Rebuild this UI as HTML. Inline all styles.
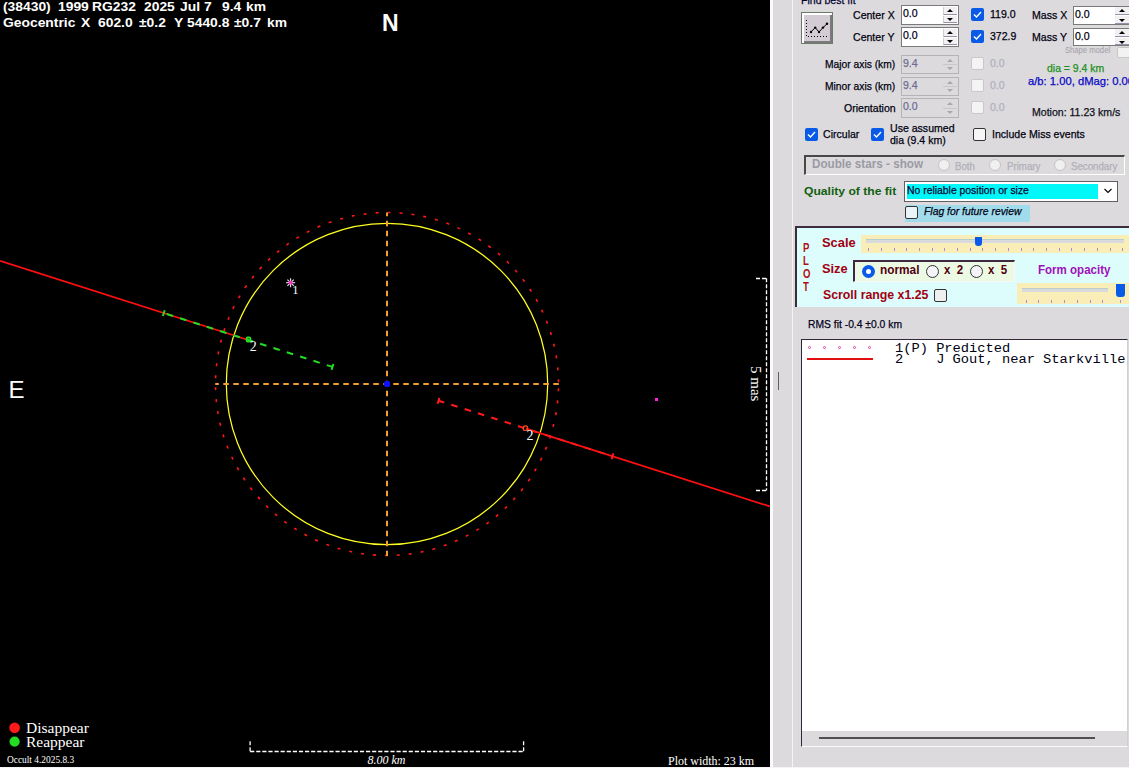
<!DOCTYPE html><html><head><meta charset="utf-8"><style>
html,body{margin:0;padding:0;}
body{width:1129px;height:768px;position:relative;overflow:hidden;background:#dcdadc;font-family:'Liberation Sans',sans-serif;}
.t{position:absolute;white-space:pre;}
.b{position:absolute;box-sizing:border-box;}
svg{position:absolute;left:0;top:0;}
</style></head><body>
<svg width="770" height="767" viewBox="0 0 770 767">
<rect x="0" y="0" width="770" height="767" fill="#000"/>
<circle cx="387" cy="384" r="171.5" fill="none" stroke="#ff1818" stroke-width="1.6" stroke-dasharray="3 9" stroke-dashoffset="-4.4"/>
<circle cx="387" cy="384" r="160.7" fill="none" stroke="#ffff20" stroke-width="1.25"/>
<line x1="215.2" y1="384" x2="558.8" y2="384" stroke="#f0a030" stroke-width="2" stroke-dasharray="5.5 4.5" stroke-dashoffset="1.9"/>
<line x1="387" y1="212.4" x2="387" y2="556" stroke="#f0a030" stroke-width="2" stroke-dasharray="5.5 4.5" stroke-dashoffset="1.6"/>
<circle cx="387" cy="384" r="3.2" fill="#1010ff"/>
<line x1="0" y1="260.80" x2="248.3" y2="340.03" stroke="#ff1010" stroke-width="1.7"/>
<line x1="526" y1="428.64" x2="770" y2="506.50" stroke="#ff1010" stroke-width="1.7"/>
<line x1="163.8" y1="313.07" x2="332.5" y2="366.90" stroke="#22dd22" stroke-width="2" stroke-dasharray="6.6 7.4" stroke-dashoffset="-3.1"/>
<line x1="162.89" y1="315.93" x2="164.71" y2="310.21" stroke="#22dd22" stroke-width="2"/>
<line x1="331.59" y1="369.76" x2="333.41" y2="364.04" stroke="#22dd22" stroke-width="2"/>
<line x1="438.5" y1="400.72" x2="612.5" y2="456.24" stroke="#ff1a1a" stroke-width="2" stroke-dasharray="6.6 7.4" stroke-dashoffset="0.6"/>
<line x1="437.59" y1="403.58" x2="439.41" y2="397.86" stroke="#ff1a1a" stroke-width="2"/>
<line x1="611.59" y1="459.10" x2="613.41" y2="453.39" stroke="#ff1a1a" stroke-width="2"/>
<rect x="246.6" y="337.5" width="3.8" height="4" rx="1" fill="none" stroke="#22dd22" stroke-width="1.8"/>
<circle cx="525.4" cy="428.2" r="2.3" fill="none" stroke="#ff4a20" stroke-width="1.2"/>
<line x1="295.10" y1="282.70" x2="286.10" y2="282.70" stroke="#f4dcf4" stroke-width="1.1"/>
<line x1="293.78" y1="285.88" x2="287.42" y2="279.52" stroke="#f4dcf4" stroke-width="1.1"/>
<line x1="290.60" y1="287.20" x2="290.60" y2="278.20" stroke="#f4dcf4" stroke-width="1.1"/>
<line x1="287.42" y1="285.88" x2="293.78" y2="279.52" stroke="#f4dcf4" stroke-width="1.1"/>
<circle cx="290.6" cy="282.7" r="1.9" fill="#ff30c8"/>
<rect x="655" y="398" width="3" height="3" fill="#ff20e0"/>
<line x1="766.5" y1="278.2" x2="766.5" y2="490.5" stroke="#fff" stroke-width="1.3" stroke-dasharray="4 2"/>
<line x1="756" y1="278.5" x2="766.5" y2="278.5" stroke="#fff" stroke-width="1.3" stroke-dasharray="4 2"/>
<line x1="756" y1="490.5" x2="766.5" y2="490.5" stroke="#fff" stroke-width="1.3" stroke-dasharray="4 2"/>
<line x1="250.1" y1="751.5" x2="523.6" y2="751.5" stroke="#fff" stroke-width="1.3" stroke-dasharray="4.2 1.9"/>
<line x1="250.1" y1="741.2" x2="250.1" y2="751.5" stroke="#fff" stroke-width="1.3" stroke-dasharray="4 2"/>
<line x1="523.6" y1="741.2" x2="523.6" y2="751.5" stroke="#fff" stroke-width="1.3" stroke-dasharray="4 2"/>
<circle cx="14.6" cy="727.8" r="5.3" fill="#ff1a1a"/>
<circle cx="14.6" cy="741.6" r="5.1" fill="#22dd22"/>
</svg>
<div class="t" style="left:3.20px;top:-0.40px;font-family:'Liberation Sans';font-size:13px;line-height:13px;color:#fff;font-weight:bold;transform:scaleX(1.065);transform-origin:0 0;">(38430)</div>
<div class="t" style="left:58.20px;top:-0.40px;font-family:'Liberation Sans';font-size:13px;line-height:13px;color:#fff;font-weight:bold;transform:scaleX(1.065);transform-origin:0 0;">1999</div>
<div class="t" style="left:91.70px;top:-0.40px;font-family:'Liberation Sans';font-size:13px;line-height:13px;color:#fff;font-weight:bold;transform:scaleX(1.065);transform-origin:0 0;">RG232</div>
<div class="t" style="left:144.10px;top:-0.40px;font-family:'Liberation Sans';font-size:13px;line-height:13px;color:#fff;font-weight:bold;transform:scaleX(1.065);transform-origin:0 0;">2025</div>
<div class="t" style="left:180.20px;top:-0.40px;font-family:'Liberation Sans';font-size:13px;line-height:13px;color:#fff;font-weight:bold;transform:scaleX(1.065);transform-origin:0 0;">Jul</div>
<div class="t" style="left:204.10px;top:-0.40px;font-family:'Liberation Sans';font-size:13px;line-height:13px;color:#fff;font-weight:bold;transform:scaleX(1.065);transform-origin:0 0;">7</div>
<div class="t" style="left:221.70px;top:-0.40px;font-family:'Liberation Sans';font-size:13px;line-height:13px;color:#fff;font-weight:bold;transform:scaleX(1.065);transform-origin:0 0;">9.4</div>
<div class="t" style="left:246.10px;top:-0.40px;font-family:'Liberation Sans';font-size:13px;line-height:13px;color:#fff;font-weight:bold;transform:scaleX(1.065);transform-origin:0 0;">km</div>
<div class="t" style="left:3.20px;top:15.60px;font-family:'Liberation Sans';font-size:13px;line-height:13px;color:#fff;font-weight:bold;transform:scaleX(1.065);transform-origin:0 0;">Geocentric</div>
<div class="t" style="left:81.20px;top:15.60px;font-family:'Liberation Sans';font-size:13px;line-height:13px;color:#fff;font-weight:bold;transform:scaleX(1.065);transform-origin:0 0;">X</div>
<div class="t" style="left:98.00px;top:15.60px;font-family:'Liberation Sans';font-size:13px;line-height:13px;color:#fff;font-weight:bold;transform:scaleX(1.065);transform-origin:0 0;">602.0</div>
<div class="t" style="left:138.70px;top:15.60px;font-family:'Liberation Sans';font-size:13px;line-height:13px;color:#fff;font-weight:bold;transform:scaleX(1.065);transform-origin:0 0;">±0.2</div>
<div class="t" style="left:174.20px;top:15.60px;font-family:'Liberation Sans';font-size:13px;line-height:13px;color:#fff;font-weight:bold;transform:scaleX(1.065);transform-origin:0 0;">Y</div>
<div class="t" style="left:187.10px;top:15.60px;font-family:'Liberation Sans';font-size:13px;line-height:13px;color:#fff;font-weight:bold;transform:scaleX(1.065);transform-origin:0 0;">5440.8</div>
<div class="t" style="left:234.40px;top:15.60px;font-family:'Liberation Sans';font-size:13px;line-height:13px;color:#fff;font-weight:bold;transform:scaleX(1.065);transform-origin:0 0;">±0.7</div>
<div class="t" style="left:266.70px;top:15.60px;font-family:'Liberation Sans';font-size:13px;line-height:13px;color:#fff;font-weight:bold;transform:scaleX(1.065);transform-origin:0 0;">km</div>
<div class="t" style="left:382.00px;top:11.53px;font-family:'Liberation Sans';font-size:23px;line-height:23px;color:#fff;font-weight:bold;">N</div>
<div class="t" style="left:8.50px;top:377.68px;font-family:'Liberation Sans';font-size:24px;line-height:24px;color:#fff;">E</div>
<div class="t" style="left:292.20px;top:283.53px;font-family:'Liberation Serif';font-size:12.5px;line-height:12.5px;color:#f0ffff;">1</div>
<div class="t" style="left:249.80px;top:340.47px;font-family:'Liberation Serif';font-size:14px;line-height:14px;color:#f4faff;">2</div>
<div class="t" style="left:526.60px;top:429.47px;font-family:'Liberation Serif';font-size:14px;line-height:14px;color:#f4faff;">2</div>
<div class="t" style="left:26.00px;top:720.22px;font-family:'Liberation Serif';font-size:15.5px;line-height:15.5px;color:#fff;">Disappear</div>
<div class="t" style="left:26.00px;top:733.92px;font-family:'Liberation Serif';font-size:15.5px;line-height:15.5px;color:#fff;">Reappear</div>
<div class="t" style="left:7.20px;top:754.62px;font-family:'Liberation Serif';font-size:10px;line-height:10px;color:#fff;transform:scaleX(0.937);transform-origin:0 0;">Occult 4.2025.8.3</div>
<div class="t" style="left:367.50px;top:754.15px;font-family:'Liberation Serif';font-size:12px;line-height:12px;color:#fff;font-style:italic;">8.00 km</div>
<div class="t" style="left:668.00px;top:753.81px;font-family:'Liberation Serif';font-size:13px;line-height:13px;color:#fff;transform:scaleX(0.92);transform-origin:0 0;">Plot width: 23 km</div>
<div class="t" style="left:745px;top:366.3px;width:20px;height:40px;"><div style="position:absolute;left:17.8px;top:0;transform:rotate(90deg);transform-origin:0 0;font-family:'Liberation Serif';font-size:15px;line-height:15px;color:#fff;white-space:pre">5 mas</div></div>
<div class="b" style="left:770px;top:0px;width:3px;height:767px;background:#fbfbfb;"></div>
<div class="b" style="left:792px;top:0px;width:1px;height:767px;background:#f4f4f4;"></div>
<div class="b" style="left:0px;top:767px;width:1129px;height:1px;background:#f4f4f4;"></div>
<div class="t" style="left:801.20px;top:-5.13px;font-family:'Liberation Sans';font-size:11.5px;line-height:11.5px;color:#000030;transform:scaleX(0.9182608695652175);transform-origin:0 0;-webkit-text-stroke:0.25px #000030;">Find best fit</div>
<div class="b" style="left:801px;top:12px;width:32px;height:32px;background:#d4ccd4;border:1px solid #6a7a6a;box-shadow:inset 2px 2px 0 #fff, inset -2px -2px 0 #7a7a7a;"></div>
<svg style="left:801px;top:12px" width="32" height="32"><path d="M5.5 8 V24.5 H26" fill="none" stroke="#000" stroke-width="1" stroke-dasharray="1 2"/><polyline points="10,20 14.2,15.6 18,20 22,15.6 26,11.8" fill="none" stroke="#000" stroke-width="1"/><circle cx="10" cy="20" r="1.2"/><circle cx="14.2" cy="15.6" r="1.2"/><circle cx="18" cy="20" r="1.2"/><circle cx="22" cy="15.6" r="1.2"/><circle cx="26" cy="11.8" r="1.2"/></svg>
<div class="t" style="left:853.30px;top:10.07px;font-family:'Liberation Sans';font-size:11.5px;line-height:11.5px;color:#000010;transform:scaleX(0.9182608695652175);transform-origin:0 0;-webkit-text-stroke:0.25px #000010;">Center X</div>
<div class="t" style="left:853.30px;top:31.87px;font-family:'Liberation Sans';font-size:11.5px;line-height:11.5px;color:#000010;transform:scaleX(0.9182608695652175);transform-origin:0 0;-webkit-text-stroke:0.25px #000010;">Center Y</div>
<div class="b" style="left:901px;top:5px;width:58px;height:20px;border:1px solid #7a7a7a;background:#fff;"></div>
<div class="t" style="left:903.00px;top:8.47px;font-family:'Liberation Sans';font-size:11.5px;line-height:11.5px;color:#000020;transform:scaleX(0.9182608695652175);transform-origin:0 0;-webkit-text-stroke:0.25px #000020;">0.0</div>
<div class="b" style="left:943px;top:7px;width:14px;height:8.0px;background:#f2f0f2;border-left:1px solid #c8d4c8;border-bottom:1px solid #9890a8;"></div>
<div class="b" style="left:943px;top:15.5px;width:14px;height:7.5px;background:#f2f0f2;border-left:1px solid #c8d4c8;border-bottom:1px solid #9890a8;"></div>
<div class="b" style="left:946.5px;top:9.0px;width:0;height:0;border-left:3.5px solid transparent;border-right:3.5px solid transparent;border-bottom:3.5px solid #000;"></div>
<div class="b" style="left:946.5px;top:17.5px;width:0;height:0;border-left:3.5px solid transparent;border-right:3.5px solid transparent;border-top:3.5px solid #000;"></div>
<div class="b" style="left:901px;top:27px;width:58px;height:20px;border:1px solid #7a7a7a;background:#fff;"></div>
<div class="t" style="left:903.00px;top:30.47px;font-family:'Liberation Sans';font-size:11.5px;line-height:11.5px;color:#000020;transform:scaleX(0.9182608695652175);transform-origin:0 0;-webkit-text-stroke:0.25px #000020;">0.0</div>
<div class="b" style="left:943px;top:29px;width:14px;height:8.0px;background:#f2f0f2;border-left:1px solid #c8d4c8;border-bottom:1px solid #9890a8;"></div>
<div class="b" style="left:943px;top:37.5px;width:14px;height:7.5px;background:#f2f0f2;border-left:1px solid #c8d4c8;border-bottom:1px solid #9890a8;"></div>
<div class="b" style="left:946.5px;top:31.0px;width:0;height:0;border-left:3.5px solid transparent;border-right:3.5px solid transparent;border-bottom:3.5px solid #000;"></div>
<div class="b" style="left:946.5px;top:39.5px;width:0;height:0;border-left:3.5px solid transparent;border-right:3.5px solid transparent;border-top:3.5px solid #000;"></div>
<div class="b" style="left:971px;top:8px;width:13px;height:13px;background:#0a5ae8;border-radius:2px;"></div>
<svg style="left:971px;top:8px" width="13" height="13"><polyline points="3,6.5 5.5,9 10,4" fill="none" stroke="#fff" stroke-width="1.4"/></svg>
<div class="b" style="left:971px;top:30px;width:13px;height:13px;background:#0a5ae8;border-radius:2px;"></div>
<svg style="left:971px;top:30px" width="13" height="13"><polyline points="3,6.5 5.5,9 10,4" fill="none" stroke="#fff" stroke-width="1.4"/></svg>
<div class="t" style="left:990.20px;top:8.97px;font-family:'Liberation Sans';font-size:11.5px;line-height:11.5px;color:#000010;transform:scaleX(0.9182608695652175);transform-origin:0 0;-webkit-text-stroke:0.25px #000010;">119.0</div>
<div class="t" style="left:990.20px;top:30.97px;font-family:'Liberation Sans';font-size:11.5px;line-height:11.5px;color:#000010;transform:scaleX(0.9182608695652175);transform-origin:0 0;-webkit-text-stroke:0.25px #000010;">372.9</div>
<div class="t" style="left:1032.10px;top:10.47px;font-family:'Liberation Sans';font-size:11.5px;line-height:11.5px;color:#000010;transform:scaleX(0.9182608695652175);transform-origin:0 0;-webkit-text-stroke:0.25px #000010;">Mass X</div>
<div class="t" style="left:1032.10px;top:32.17px;font-family:'Liberation Sans';font-size:11.5px;line-height:11.5px;color:#000010;transform:scaleX(0.9182608695652175);transform-origin:0 0;-webkit-text-stroke:0.25px #000010;">Mass Y</div>
<div class="b" style="left:1073px;top:6px;width:67px;height:19px;border:1px solid #7a7a7a;background:#fff;"></div>
<div class="t" style="left:1075.00px;top:9.27px;font-family:'Liberation Sans';font-size:11.5px;line-height:11.5px;color:#000010;transform:scaleX(0.9182608695652175);transform-origin:0 0;-webkit-text-stroke:0.25px #000010;">0.0</div>
<div class="b" style="left:1073px;top:28px;width:67px;height:18px;border:1px solid #7a7a7a;background:#fff;"></div>
<div class="t" style="left:1075.00px;top:30.97px;font-family:'Liberation Sans';font-size:11.5px;line-height:11.5px;color:#000010;transform:scaleX(0.9182608695652175);transform-origin:0 0;-webkit-text-stroke:0.25px #000010;">0.0</div>
<div class="b" style="left:1115px;top:7px;width:14px;height:8px;background:#f2f0f2;border-bottom:1px solid #9890a8;"></div>
<div class="b" style="left:1115px;top:16px;width:14px;height:8px;background:#f2f0f2;border-bottom:1px solid #9890a8;"></div>
<div class="b" style="left:1115px;top:29px;width:14px;height:8px;background:#f2f0f2;border-bottom:1px solid #9890a8;"></div>
<div class="b" style="left:1115px;top:38px;width:14px;height:7px;background:#f2f0f2;border-bottom:1px solid #9890a8;"></div>
<div class="b" style="left:1118.5px;top:9px;width:0;height:0;border-left:3.5px solid transparent;border-right:3.5px solid transparent;border-bottom:3.5px solid #000;"></div>
<div class="b" style="left:1118.5px;top:19px;width:0;height:0;border-left:3.5px solid transparent;border-right:3.5px solid transparent;border-top:3.5px solid #000;"></div>
<div class="b" style="left:1118.5px;top:31px;width:0;height:0;border-left:3.5px solid transparent;border-right:3.5px solid transparent;border-bottom:3.5px solid #000;"></div>
<div class="b" style="left:1118.5px;top:41px;width:0;height:0;border-left:3.5px solid transparent;border-right:3.5px solid transparent;border-top:3.5px solid #000;"></div>
<div class="t" style="left:1064.80px;top:46.38px;font-family:'Liberation Sans';font-size:9px;line-height:9px;color:#a0a0a8;transform:scaleX(0.85);transform-origin:0 0;">Shape model</div>
<div class="b" style="left:1117px;top:47px;width:14px;height:11px;border:1px solid #c8c8c8;background:#f2f2f2;border-radius:2px;"></div>
<div class="t" style="left:824.90px;top:59.17px;font-family:'Liberation Sans';font-size:11.5px;line-height:11.5px;color:#000010;transform:scaleX(0.8932173913043479);transform-origin:0 0;-webkit-text-stroke:0.25px #000010;">Major axis (km)</div>
<div class="t" style="left:824.90px;top:81.27px;font-family:'Liberation Sans';font-size:11.5px;line-height:11.5px;color:#000010;transform:scaleX(0.8932173913043479);transform-origin:0 0;-webkit-text-stroke:0.25px #000010;">Minor axis (km)</div>
<div class="t" style="left:843.50px;top:102.57px;font-family:'Liberation Sans';font-size:11.5px;line-height:11.5px;color:#000010;transform:scaleX(0.9182608695652175);transform-origin:0 0;-webkit-text-stroke:0.25px #000010;">Orientation</div>
<div class="b" style="left:901px;top:55px;width:58px;height:19px;border:1px solid #b4b4b4;background:#dcdadc;"></div>
<div class="t" style="left:903.00px;top:58.47px;font-family:'Liberation Sans';font-size:11.5px;line-height:11.5px;color:#6c6c94;transform:scaleX(0.9182608695652175);transform-origin:0 0;-webkit-text-stroke:0.25px #6c6c94;">9.4</div>
<div class="b" style="left:943px;top:57px;width:14px;height:7.5px;background:#dcdadc;"></div>
<div class="b" style="left:943px;top:64.5px;width:14px;height:7.5px;background:#dcdadc;"></div>
<div class="b" style="left:943px;top:64.0px;width:14px;height:1.0px;background:#c8c8cc;"></div>
<div class="b" style="left:946.5px;top:58.5px;width:0;height:0;border-left:3.5px solid transparent;border-right:3.5px solid transparent;border-bottom:3.5px solid #a8a8a8;"></div>
<div class="b" style="left:946.5px;top:67.0px;width:0;height:0;border-left:3.5px solid transparent;border-right:3.5px solid transparent;border-top:3.5px solid #a8a8a8;"></div>
<div class="b" style="left:901px;top:77px;width:58px;height:19px;border:1px solid #b4b4b4;background:#dcdadc;"></div>
<div class="t" style="left:903.00px;top:80.47px;font-family:'Liberation Sans';font-size:11.5px;line-height:11.5px;color:#6c6c94;transform:scaleX(0.9182608695652175);transform-origin:0 0;-webkit-text-stroke:0.25px #6c6c94;">9.4</div>
<div class="b" style="left:943px;top:79px;width:14px;height:7.5px;background:#dcdadc;"></div>
<div class="b" style="left:943px;top:86.5px;width:14px;height:7.5px;background:#dcdadc;"></div>
<div class="b" style="left:943px;top:86.0px;width:14px;height:1.0px;background:#c8c8cc;"></div>
<div class="b" style="left:946.5px;top:80.5px;width:0;height:0;border-left:3.5px solid transparent;border-right:3.5px solid transparent;border-bottom:3.5px solid #a8a8a8;"></div>
<div class="b" style="left:946.5px;top:89.0px;width:0;height:0;border-left:3.5px solid transparent;border-right:3.5px solid transparent;border-top:3.5px solid #a8a8a8;"></div>
<div class="b" style="left:901px;top:98px;width:58px;height:20px;border:1px solid #b4b4b4;background:#dcdadc;"></div>
<div class="t" style="left:903.00px;top:101.47px;font-family:'Liberation Sans';font-size:11.5px;line-height:11.5px;color:#6c6c94;transform:scaleX(0.9182608695652175);transform-origin:0 0;-webkit-text-stroke:0.25px #6c6c94;">0.0</div>
<div class="b" style="left:943px;top:100px;width:14px;height:8.0px;background:#dcdadc;"></div>
<div class="b" style="left:943px;top:108.0px;width:14px;height:8.0px;background:#dcdadc;"></div>
<div class="b" style="left:943px;top:107.5px;width:14px;height:1.0px;background:#c8c8cc;"></div>
<div class="b" style="left:946.5px;top:102.0px;width:0;height:0;border-left:3.5px solid transparent;border-right:3.5px solid transparent;border-bottom:3.5px solid #a8a8a8;"></div>
<div class="b" style="left:946.5px;top:110.5px;width:0;height:0;border-left:3.5px solid transparent;border-right:3.5px solid transparent;border-top:3.5px solid #a8a8a8;"></div>
<div class="b" style="left:971px;top:57px;width:13px;height:13px;border:1px solid #c8c8c8;background:#f4f4f4;border-radius:2px;"></div>
<div class="b" style="left:971px;top:79px;width:13px;height:13px;border:1px solid #c8c8c8;background:#f4f4f4;border-radius:2px;"></div>
<div class="b" style="left:971px;top:101px;width:13px;height:13px;border:1px solid #c8c8c8;background:#f4f4f4;border-radius:2px;"></div>
<div class="t" style="left:989.50px;top:57.77px;font-family:'Liberation Sans';font-size:11.5px;line-height:11.5px;color:#b0b0c0;transform:scaleX(0.9182608695652175);transform-origin:0 0;-webkit-text-stroke:0.25px #b0b0c0;">0.0</div>
<div class="t" style="left:989.50px;top:79.77px;font-family:'Liberation Sans';font-size:11.5px;line-height:11.5px;color:#b0b0c0;transform:scaleX(0.9182608695652175);transform-origin:0 0;-webkit-text-stroke:0.25px #b0b0c0;">0.0</div>
<div class="t" style="left:989.50px;top:101.57px;font-family:'Liberation Sans';font-size:11.5px;line-height:11.5px;color:#b0b0c0;transform:scaleX(0.9182608695652175);transform-origin:0 0;-webkit-text-stroke:0.25px #b0b0c0;">0.0</div>
<div class="t" style="left:1047.10px;top:62.91px;font-family:'Liberation Sans';font-size:10.5px;line-height:10.5px;color:#209020;transform:scaleX(0.995);transform-origin:0 0;-webkit-text-stroke:0.25px #209020;">dia = 9.4 km</div>
<div class="t" style="left:1028.00px;top:76.19px;font-family:'Liberation Sans';font-size:11px;line-height:11px;color:#0808c8;transform:scaleX(1.02);transform-origin:0 0;-webkit-text-stroke:0.25px #0808c8;">a/b: 1.00, dMag: 0.00</div>
<div class="t" style="left:1032.10px;top:106.73px;font-family:'Liberation Sans';font-size:10.6px;line-height:10.6px;color:#101020;transform:scaleX(0.996);transform-origin:0 0;-webkit-text-stroke:0.25px #101020;">Motion: 11.23 km/s</div>
<div class="b" style="left:805px;top:128px;width:13px;height:13px;background:#0a5ae8;border-radius:2px;"></div>
<svg style="left:805px;top:128px" width="13" height="13"><polyline points="3,6.5 5.5,9 10,4" fill="none" stroke="#fff" stroke-width="1.4"/></svg>
<div class="t" style="left:823.10px;top:128.57px;font-family:'Liberation Sans';font-size:11.5px;line-height:11.5px;color:#000010;transform:scaleX(0.9182608695652175);transform-origin:0 0;-webkit-text-stroke:0.25px #000010;">Circular</div>
<div class="b" style="left:871px;top:128px;width:13px;height:13px;background:#0a5ae8;border-radius:2px;"></div>
<svg style="left:871px;top:128px" width="13" height="13"><polyline points="3,6.5 5.5,9 10,4" fill="none" stroke="#fff" stroke-width="1.4"/></svg>
<div class="t" style="left:890.10px;top:122.57px;font-family:'Liberation Sans';font-size:11.5px;line-height:11.5px;color:#000010;transform:scaleX(0.9182608695652175);transform-origin:0 0;-webkit-text-stroke:0.25px #000010;">Use assumed</div>
<div class="t" style="left:890.10px;top:134.67px;font-family:'Liberation Sans';font-size:11.5px;line-height:11.5px;color:#000010;transform:scaleX(0.9182608695652175);transform-origin:0 0;-webkit-text-stroke:0.25px #000010;">dia (9.4 km)</div>
<div class="b" style="left:973px;top:128px;width:13px;height:13px;border:1px solid #333;background:#f6f6f6;border-radius:2px;"></div>
<div class="t" style="left:992.10px;top:129.47px;font-family:'Liberation Sans';font-size:11.5px;line-height:11.5px;color:#000010;transform:scaleX(0.9182608695652175);transform-origin:0 0;-webkit-text-stroke:0.25px #000010;">Include Miss events</div>
<div class="b" style="left:804px;top:155px;width:321px;height:20px;border-top:2px solid #484848;border-left:2px solid #484848;border-right:1px solid #fff;border-bottom:1px solid #fff;"></div>
<div class="t" style="left:811.80px;top:158.34px;font-family:'Liberation Sans';font-size:12px;line-height:12px;color:#9a9aa4;font-weight:bold;transform:scaleX(0.974);transform-origin:0 0;">Double stars - show</div>
<div class="b" style="left:938px;top:159px;width:12px;height:12px;border-radius:50%;border:1px solid #c4c4c4;background:#f0f0f0;"></div>
<div class="t" style="left:955.10px;top:160.69px;font-family:'Liberation Sans';font-size:11px;line-height:11px;color:#b0b0b8;transform:scaleX(0.88);transform-origin:0 0;-webkit-text-stroke:0.25px #b0b0b8;">Both</div>
<div class="b" style="left:989px;top:159px;width:12px;height:12px;border-radius:50%;border:1px solid #c4c4c4;background:#f0f0f0;"></div>
<div class="t" style="left:1007.10px;top:161.19px;font-family:'Liberation Sans';font-size:11px;line-height:11px;color:#b0b0b8;transform:scaleX(0.88);transform-origin:0 0;-webkit-text-stroke:0.25px #b0b0b8;">Primary</div>
<div class="b" style="left:1054px;top:159px;width:12px;height:12px;border-radius:50%;border:1px solid #c4c4c4;background:#f0f0f0;"></div>
<div class="t" style="left:1071.40px;top:161.19px;font-family:'Liberation Sans';font-size:11px;line-height:11px;color:#b0b0b8;transform:scaleX(0.88);transform-origin:0 0;-webkit-text-stroke:0.25px #b0b0b8;">Secondary</div>
<div class="t" style="left:803.80px;top:185.57px;font-family:'Liberation Sans';font-size:11.5px;line-height:11.5px;color:#106010;font-weight:bold;transform:scaleX(1.0539130434782609);transform-origin:0 0;">Quality of the fit</div>
<div class="b" style="left:904px;top:181px;width:214px;height:21px;border:1px solid #606060;background:#fff;"></div>
<div class="b" style="left:906.5px;top:183.5px;width:191.5px;height:15.5px;background:#00f8f8;"></div>
<div class="t" style="left:907.20px;top:184.97px;font-family:'Liberation Sans';font-size:11.5px;line-height:11.5px;color:#000030;transform:scaleX(0.9036521739130434);transform-origin:0 0;-webkit-text-stroke:0.25px #000030;">No reliable position or size</div>
<svg style="left:1100px;top:184px" width="16" height="14"><polyline points="4.5,5 8,8.5 11.5,5" fill="none" stroke="#000" stroke-width="1.1"/></svg>
<div class="b" style="left:905px;top:204.5px;width:125px;height:17.5px;background:#a0dcec;"></div>
<div class="b" style="left:904.5px;top:206px;width:13.0px;height:13px;border:1px solid #333;background:#eaf4f8;border-radius:2px;"></div>
<div class="t" style="left:923.70px;top:206.07px;font-family:'Liberation Sans';font-size:11.5px;line-height:11.5px;color:#000010;font-style:italic;transform:scaleX(0.9015652173913044);transform-origin:0 0;-webkit-text-stroke:0.25px #000010;">Flag for future review</div>
<div class="b" style="left:795px;top:226px;width:345px;height:81px;background:#ddfcfc;border-top:2px solid #3c2c3c;border-left:2px solid #3c2c3c;"></div>
<div class="t" style="left:802.50px;top:241.84px;font-family:'Liberation Sans';font-size:12px;line-height:12px;color:#b01010;font-weight:bold;transform:scaleX(0.8);transform-origin:0 0;">P</div>
<div class="t" style="left:802.50px;top:254.74px;font-family:'Liberation Sans';font-size:12px;line-height:12px;color:#b01010;font-weight:bold;transform:scaleX(0.8);transform-origin:0 0;">L</div>
<div class="t" style="left:802.50px;top:267.64px;font-family:'Liberation Sans';font-size:12px;line-height:12px;color:#b01010;font-weight:bold;transform:scaleX(0.8);transform-origin:0 0;">O</div>
<div class="t" style="left:802.50px;top:280.54px;font-family:'Liberation Sans';font-size:12px;line-height:12px;color:#b01010;font-weight:bold;transform:scaleX(0.8);transform-origin:0 0;">T</div>
<div class="t" style="left:821.90px;top:237.32px;font-family:'Liberation Sans';font-size:12.5px;line-height:12.5px;color:#a00010;font-weight:bold;transform:scaleX(1.03);transform-origin:0 0;">Scale</div>
<div class="b" style="left:861px;top:234.5px;width:268px;height:18.0px;background:#faeeb8;"></div>
<div class="b" style="left:866px;top:239px;width:258px;height:3.5px;background:#d8dadc;border-top:1px solid #bcc;"></div>
<div class="b" style="left:975px;top:236.5px;width:6.5px;height:9.5px;background:#0a5ae8;border-radius:0 0 3px 3px;"></div>
<div class="b" style="left:868px;top:248px;width:1px;height:3px;background:#b888c8;"></div>
<div class="b" style="left:881px;top:248px;width:1px;height:3px;background:#b888c8;"></div>
<div class="b" style="left:894px;top:248px;width:1px;height:3px;background:#b888c8;"></div>
<div class="b" style="left:906px;top:248px;width:1px;height:3px;background:#b888c8;"></div>
<div class="b" style="left:919px;top:248px;width:1px;height:3px;background:#b888c8;"></div>
<div class="b" style="left:932px;top:248px;width:1px;height:3px;background:#b888c8;"></div>
<div class="b" style="left:944px;top:248px;width:1px;height:3px;background:#b888c8;"></div>
<div class="b" style="left:957px;top:248px;width:1px;height:3px;background:#b888c8;"></div>
<div class="b" style="left:970px;top:248px;width:1px;height:3px;background:#b888c8;"></div>
<div class="b" style="left:982px;top:248px;width:1px;height:3px;background:#b888c8;"></div>
<div class="b" style="left:995px;top:248px;width:1px;height:3px;background:#b888c8;"></div>
<div class="b" style="left:1008px;top:248px;width:1px;height:3px;background:#b888c8;"></div>
<div class="b" style="left:1021px;top:248px;width:1px;height:3px;background:#b888c8;"></div>
<div class="b" style="left:1033px;top:248px;width:1px;height:3px;background:#b888c8;"></div>
<div class="b" style="left:1046px;top:248px;width:1px;height:3px;background:#b888c8;"></div>
<div class="b" style="left:1059px;top:248px;width:1px;height:3px;background:#b888c8;"></div>
<div class="b" style="left:1071px;top:248px;width:1px;height:3px;background:#b888c8;"></div>
<div class="b" style="left:1084px;top:248px;width:1px;height:3px;background:#b888c8;"></div>
<div class="b" style="left:1097px;top:248px;width:1px;height:3px;background:#b888c8;"></div>
<div class="b" style="left:1110px;top:248px;width:1px;height:3px;background:#b888c8;"></div>
<div class="b" style="left:1122px;top:248px;width:1px;height:3px;background:#b888c8;"></div>
<div class="t" style="left:821.90px;top:263.22px;font-family:'Liberation Sans';font-size:12.5px;line-height:12.5px;color:#a00010;font-weight:bold;transform:scaleX(1.025);transform-origin:0 0;">Size</div>
<div class="b" style="left:852.5px;top:260px;width:162.5px;height:21.5px;background:#ecfae4;border-top:2px solid #402840;border-left:2px solid #402840;border-right:1px solid #f8f8f8;border-bottom:1px solid #f8f8f8;"></div>
<div class="b" style="left:862px;top:264.5px;width:13px;height:13.0px;border-radius:50%;background:#0a5ae8;"></div>
<div class="b" style="left:866px;top:268.5px;width:5px;height:5.0px;border-radius:50%;background:#fff;"></div>
<div class="t" style="left:879.90px;top:263.92px;font-family:'Liberation Sans';font-size:12.5px;line-height:12.5px;color:#500010;font-weight:bold;transform:scaleX(0.946);transform-origin:0 0;">normal</div>
<div class="b" style="left:926px;top:264.5px;width:13px;height:13.0px;border-radius:50%;border:1px solid #333;background:#f4f4f8;"></div>
<div class="t" style="left:943.50px;top:263.92px;font-family:'Liberation Sans';font-size:12.5px;line-height:12.5px;color:#500010;font-weight:bold;transform:scaleX(0.92);transform-origin:0 0;">x  2</div>
<div class="b" style="left:970px;top:264.5px;width:13px;height:13.0px;border-radius:50%;border:1px solid #333;background:#f4f4f8;"></div>
<div class="t" style="left:988.30px;top:263.92px;font-family:'Liberation Sans';font-size:12.5px;line-height:12.5px;color:#500010;font-weight:bold;transform:scaleX(0.92);transform-origin:0 0;">x  5</div>
<div class="t" style="left:1037.50px;top:264.12px;font-family:'Liberation Sans';font-size:12.5px;line-height:12.5px;color:#a010b8;font-weight:bold;transform:scaleX(0.923);transform-origin:0 0;">Form opacity</div>
<div class="t" style="left:822.90px;top:289.22px;font-family:'Liberation Sans';font-size:12.5px;line-height:12.5px;color:#a00010;font-weight:bold;transform:scaleX(0.985);transform-origin:0 0;">Scroll range x1.25</div>
<div class="b" style="left:934px;top:289px;width:13px;height:13px;border:1px solid #333;background:#eef0f0;border-radius:2px;"></div>
<div class="b" style="left:1016.5px;top:282.5px;width:112.5px;height:21.0px;background:#faeeb8;"></div>
<div class="b" style="left:1022px;top:288px;width:86px;height:3.5px;background:#d8dadc;border-top:1px solid #bcc;"></div>
<div class="b" style="left:1116px;top:284px;width:8.5px;height:13px;background:#0a5ae8;border-radius:0 0 3px 3px;"></div>
<div class="b" style="left:1026px;top:299.5px;width:1px;height:3.0px;background:#b888c8;"></div>
<div class="b" style="left:1038px;top:299.5px;width:1px;height:3.0px;background:#b888c8;"></div>
<div class="b" style="left:1051px;top:299.5px;width:1px;height:3.0px;background:#b888c8;"></div>
<div class="b" style="left:1064px;top:299.5px;width:1px;height:3.0px;background:#b888c8;"></div>
<div class="b" style="left:1077px;top:299.5px;width:1px;height:3.0px;background:#b888c8;"></div>
<div class="b" style="left:1090px;top:299.5px;width:1px;height:3.0px;background:#b888c8;"></div>
<div class="b" style="left:1102px;top:299.5px;width:1px;height:3.0px;background:#b888c8;"></div>
<div class="b" style="left:1120px;top:299.5px;width:1px;height:3.0px;background:#b888c8;"></div>
<div class="t" style="left:807.90px;top:318.87px;font-family:'Liberation Sans';font-size:11.5px;line-height:11.5px;color:#000018;transform:scaleX(0.8973913043478261);transform-origin:0 0;-webkit-text-stroke:0.25px #000018;">RMS fit -0.4 ±0.0 km</div>
<div class="b" style="left:800.5px;top:339px;width:327.5px;height:408px;background:#fff;border-top:1px solid #302838;border-left:1px solid #302838;border-right:1px solid #d0d0d0;border-bottom:1px solid #fafafa;"></div>
<div class="b" style="left:801.5px;top:730.5px;width:325.5px;height:15.5px;background:#dcdadc;"></div>
<div class="b" style="left:819px;top:737px;width:276px;height:2px;background:#505050;"></div>
<div class="b" style="left:807.6px;top:345.7px;width:3.5px;height:3.5px;border-radius:50%;border:1px solid #e040a0;"></div>
<div class="b" style="left:822.6px;top:345.7px;width:3.5px;height:3.5px;border-radius:50%;border:1px solid #e040a0;"></div>
<div class="b" style="left:837.6px;top:345.7px;width:3.5px;height:3.5px;border-radius:50%;border:1px solid #e040a0;"></div>
<div class="b" style="left:852.6px;top:345.7px;width:3.5px;height:3.5px;border-radius:50%;border:1px solid #e040a0;"></div>
<div class="b" style="left:867.6px;top:345.7px;width:3.5px;height:3.5px;border-radius:50%;border:1px solid #e040a0;"></div>
<div class="b" style="left:807px;top:357.6px;width:66px;height:2.1999999999999886px;background:#e01010;"></div>
<div class="t" style="left:894.60px;top:342.77px;font-family:'Liberation Mono';font-size:12.3px;line-height:12.3px;color:#000010;transform:scaleX(1.115);transform-origin:0 0;">1(P) Predicted</div>
<div class="t" style="left:894.60px;top:354.17px;font-family:'Liberation Mono';font-size:12.3px;line-height:12.3px;color:#000010;transform:scaleX(1.115);transform-origin:0 0;">2    J Gout, near Starkville</div>
<div class="b" style="left:777.5px;top:372px;width:1.0px;height:18px;background:#606060;"></div>
</body></html>
